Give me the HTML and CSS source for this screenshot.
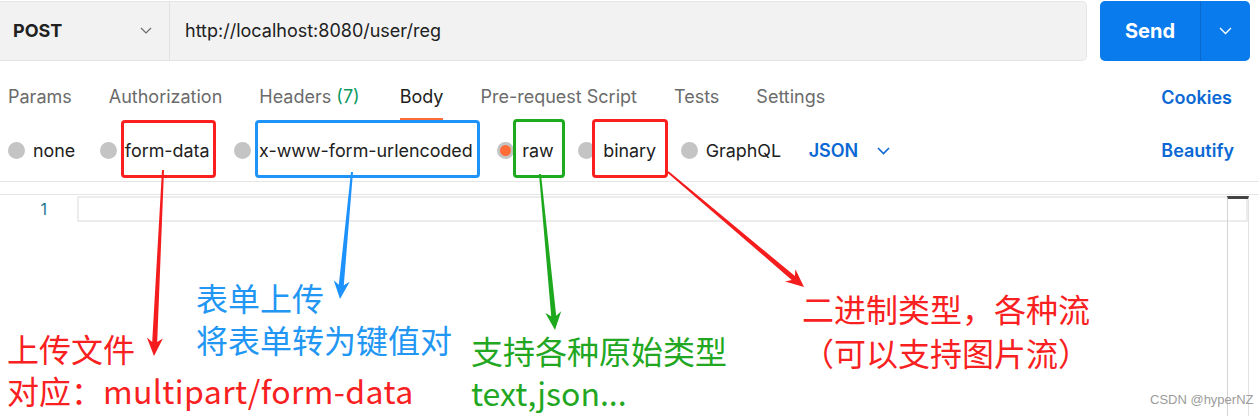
FILE: index.html
```html
<!DOCTYPE html>
<html lang="zh-CN">
<head>
    <meta charset="UTF-8">
    <title>POST http://localhost:8080/user/reg</title>
    <link rel="stylesheet" href="styles.css">
</head>
<body>
    <div class="app">
        <!-- Barra de la petición -->
        <div class="request-bar">
            <div class="url-box">
                <div class="method">
                    <span class="method-name">POST</span>
                    <svg class="chevron" width="12" height="7" viewBox="0 0 12 7"><path d="M1 1l5 5 5-5" fill="none" stroke="#6b6b6b" stroke-width="1.2"/></svg>
                </div>
                <div class="url">http://localhost:8080/user/reg</div>
            </div>
            <div class="send">
                <span class="send-label">Send</span>
                <span class="send-more">
                    <svg width="13" height="8" viewBox="0 0 13 8"><path d="M1 1l5.5 5.5L12 1" fill="none" stroke="#fff" stroke-width="1.4"/></svg>
                </span>
            </div>
        </div>

        <!-- Pestañas -->
        <div class="tabs">
            <span class="tab">Params</span>
            <span class="tab">Authorization</span>
            <span class="tab">Headers&nbsp;<em class="count">(7)</em></span>
            <span class="tab active">Body</span>
            <span class="tab">Pre-request Script</span>
            <span class="tab">Tests</span>
            <span class="tab">Settings</span>
            <span class="link cookies">Cookies</span>
        </div>

        <!-- Tipos de cuerpo -->
        <div class="body-types">
            <label class="radio"><span class="dot"></span><span class="radio-text">none</span></label>
            <label class="radio"><span class="dot"></span><span class="radio-text mark mark-red mark-form">form-data</span></label>
            <label class="radio"><span class="dot"></span><span class="radio-text mark mark-blue mark-url">x-www-form-urlencoded</span></label>
            <label class="radio"><span class="dot checked"></span><span class="radio-text mark mark-green mark-raw">raw</span></label>
            <label class="radio"><span class="dot"></span><span class="radio-text mark mark-red mark-bin">binary</span></label>
            <label class="radio"><span class="dot"></span><span class="radio-text">GraphQL</span></label>
            <span class="lang">JSON
                <svg width="13" height="8" viewBox="0 0 13 8"><path d="M1 1l5.5 5.5L12 1" fill="none" stroke="#0b68d4" stroke-width="1.6"/></svg>
            </span>
            <span class="link beautify">Beautify</span>
        </div>

        <!-- Editor -->
        <div class="editor">
            <div class="line">
                <span class="gutter">1</span>
                <span class="code"></span>
            </div>
            <div class="scrollbar"></div>
        </div>

        <!-- Anotaciones -->
        <svg class="arrows" width="1259" height="416" viewBox="0 0 1259 416">
            <polygon fill="#f41c1c" points="162,170 152.2,341.9 146.9,337.6 154,356 162.9,338.4 157.2,342.1 164,170"/>
            <polygon fill="#1e92fb" points="351,171.9 338.8,284.8 333.7,280.3 340,299 349.7,281.8 343.8,285.3 353,172.1"/>
            <polygon fill="#1ea81e" points="539,174.1 551.2,316.3 545.3,312.9 555,330 561.2,311.3 556.2,315.8 541,173.9"/>
            <polygon fill="#f41c1c" points="667.4,172.8 791.7,279.9 785.1,281.5 804,287 795.4,269.3 794.9,276.1 668.6,171.2"/>
        </svg>

        <div class="note note-blue">表单上传<br>将表单转为键值对</div>
        <div class="note note-red note-file">上传文件<br>对应：<span class="latin">multipart/form-data</span></div>
        <div class="note note-green">支持各种原始类型<br>text,json...</div>
        <div class="note note-red note-binary">二进制类型，各种流<br>（可以支持图片流）</div>

        <div class="watermark">CSDN @hyperNZ</div>
    </div>
</body>
</html>
```

FILE: styles.css
```css
/* Estilos generales */
body {
    margin: 0;
    background-color: #ffffff;
    font-family: Inter, "Noto Sans", sans-serif;
    color: #212121;
}

.app {
    position: relative;
    width: 1259px;
    height: 416px;
    overflow: hidden;
}

/* Barra de la petición */
.request-bar {
    display: flex;
    gap: 13px;
    height: 60px;
    padding: 1px 9px 0 0;
}

.url-box {
    flex: 1;
    display: flex;
    align-items: center;
    background-color: #f2f2f2;
    border: 1px solid #e5e5e5;
    border-left: none;
    border-radius: 0 5px 5px 0;
}

.method {
    display: flex;
    align-items: center;
    justify-content: space-between;
    box-sizing: border-box;
    width: 170px;
    height: 100%;
    padding: 0 17px 2px 13px;
    border-right: 1px solid #e2e2e2;
}

.method-name {
    font-size: 18px;
    font-weight: 700;
}

.url {
    padding: 0 0 2px 15px;
    font-size: 18px;
}

.send {
    display: flex;
    width: 150px;
    background-color: #097bed;
    border-radius: 5px;
    color: #ffffff;
}

.send-label {
    display: flex;
    align-items: center;
    justify-content: center;
    width: 100px;
    border-right: 1px solid #0a69cf;
    font-size: 20px;
    font-weight: 700;
}

.send-more {
    flex: 1;
    display: flex;
    align-items: center;
    justify-content: center;
}

/* Pestañas */
.tabs {
    display: flex;
    align-items: stretch;
    gap: 37px;
    height: 48px;
    padding: 12px 27px 0 8px;
}

.tab {
    display: flex;
    align-items: center;
    box-sizing: border-box;
    padding-top: 1px;
    border-bottom: 3px solid transparent;
    font-size: 18px;
    color: #6b6b6b;
}

.tab .count {
    font-style: normal;
    color: #0c9a62;
}

.tab.active {
    margin-left: 3px;
    color: #212121;
    border-bottom-color: #ff6c37;
}

.link {
    font-size: 18px;
    font-weight: 600;
    color: #0b68d4;
}

.cookies {
    margin-left: auto;
    align-self: center;
}

/* Tipos de cuerpo */
.body-types {
    display: flex;
    align-items: center;
    gap: 24.5px;
    height: 59px;
    padding: 0 25px 1px 8px;
    border-bottom: 1px solid #e6e6e6;
}

.radio {
    display: flex;
    align-items: center;
    gap: 8px;
    font-size: 17.9px;
}

.dot {
    position: relative;
    width: 17px;
    height: 17px;
    border-radius: 50%;
    background-color: #c4c4c4;
}

.dot.checked::after {
    content: "";
    position: absolute;
    left: 3px;
    top: 3px;
    width: 11px;
    height: 11px;
    border-radius: 50%;
    background-color: #ff6c37;
}

.radio-text {
    position: relative;
}

/* Recuadros de anotación */
.mark::after {
    content: "";
    position: absolute;
    top: -20px;
    bottom: -17px;
    left: -4px;
    right: -6px;
    border: 3px solid;
    border-radius: 4px;
}

.mark-red::after { border-color: #fb1f1f; }
.mark-blue::after { border-color: #1e94fb; }
.mark-green::after { border-color: #1eaa1e; }

.mark-url::after { left: -4px; right: -7px; }
.mark-raw::after { left: -9px; right: -11px; top: -21px; }
.mark-bin::after { left: -11px; right: -12px; top: -21px; }

.lang {
    display: flex;
    align-items: center;
    gap: 19px;
    margin-left: 3px;
    font-size: 18px;
    font-weight: 600;
    color: #0b68d4;
}

.beautify {
    margin-left: auto;
}

/* Editor */
.editor {
    position: relative;
    height: 222px;
    margin-top: 12px;
    border-top: 1px solid #e6e6e6;
}

.line {
    display: flex;
    align-items: center;
    height: 26px;
    margin-top: 1px;
}

.gutter {
    box-sizing: border-box;
    width: 77px;
    padding-right: 30px;
    text-align: right;
    font-size: 16px;
    color: #237893;
}

.code {
    flex: 1;
    box-sizing: border-box;
    height: 26px;
    margin-right: 11px;
    border: 2px solid #ececec;
}

.scrollbar {
    position: absolute;
    top: 1px;
    right: 10px;
    bottom: 0;
    width: 20px;
    border-left: 1px solid #d4d4d4;
    border-right: 1px solid #e2e2e2;
    border-top: 3px solid #444444;
}

/* Anotaciones */
.arrows {
    position: absolute;
    left: 0;
    top: 0;
}

.note {
    position: absolute;
    font-family: "Noto Sans CJK SC", sans-serif;
    font-size: 32px;
    line-height: 42px;
    white-space: nowrap;
}

.note .latin {
    letter-spacing: 0.4px;
}

.note-red { color: #f82020; }
.note-blue { color: #2196f3; left: 196px; top: 276px; }
.note-green { color: #22a722; left: 471px; top: 329px; }
.note-file { left: 7px; top: 327px; }
.note-binary { left: 802px; top: 286px; line-height: 44px; }

.watermark {
    position: absolute;
    left: 1150px;
    top: 392px;
    font-family: "Liberation Sans", Arial, sans-serif;
    font-size: 13px;
    color: #9c9c9c;
}
```
